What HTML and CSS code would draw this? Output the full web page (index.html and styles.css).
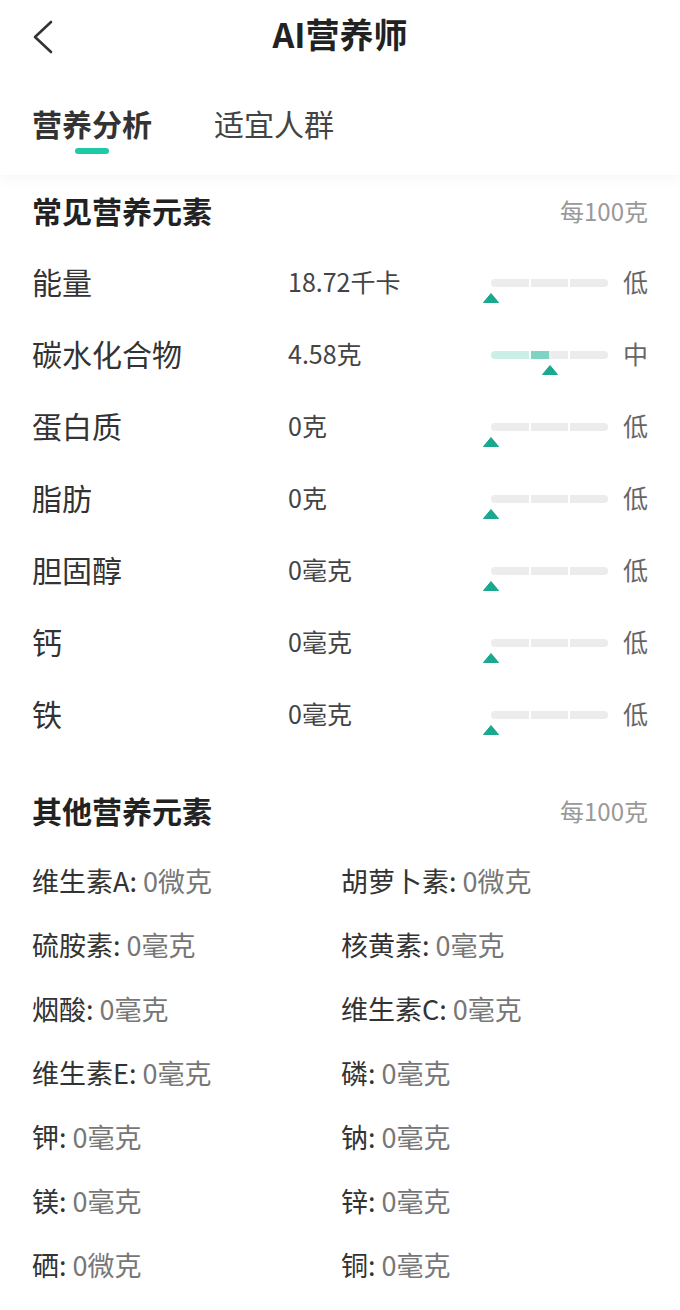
FILE: index.html
```html
<!DOCTYPE html>
<html lang="zh">
<head>
<meta charset="utf-8">
<title>AI营养师</title>
<link rel="stylesheet" href="styles.css">
</head>
<body>
<header class="header">
  <div class="nav">
    <svg class="back" width="24" height="34" viewBox="0 0 24 34"><polyline points="19,2 3,17 19,32" fill="none" stroke="#333" stroke-width="2.6" stroke-linecap="round" stroke-linejoin="round"/></svg>
    <h1 class="title">AI营养师</h1>
  </div>
  <div class="tabs">
    <div class="tab active">营养分析<span class="indicator"></span></div>
    <div class="tab">适宜人群</div>
  </div>
</header>

<section class="section common">
  <div class="sec-head"><h2>常见营养元素</h2><span class="unit">每100克</span></div>
  <div class="rows">
    <div class="row"><span class="label">能量</span><span class="value">18.72千卡</span>
      <div class="bar"><div class="segs"><i class="seg"></i><i class="seg"></i><i class="seg"></i></div><svg class="marker" style="left:0%" width="16" height="10" viewBox="0 0 16 10"><path d="M8 0.5 L15.5 9.5 L0.5 9.5 Z" fill="#1aa88f" stroke="#1aa88f" stroke-linejoin="round"/></svg></div>
      <span class="level">低</span></div>
    <div class="row"><span class="label">碳水化合物</span><span class="value">4.58克</span>
      <div class="bar"><div class="segs"><i class="seg light"></i><i class="seg half"></i><i class="seg"></i></div><svg class="marker" style="left:50.4%" width="16" height="10" viewBox="0 0 16 10"><path d="M8 0.5 L15.5 9.5 L0.5 9.5 Z" fill="#1aa88f" stroke="#1aa88f" stroke-linejoin="round"/></svg></div>
      <span class="level">中</span></div>
    <div class="row"><span class="label">蛋白质</span><span class="value">0克</span>
      <div class="bar"><div class="segs"><i class="seg"></i><i class="seg"></i><i class="seg"></i></div><svg class="marker" style="left:0%" width="16" height="10" viewBox="0 0 16 10"><path d="M8 0.5 L15.5 9.5 L0.5 9.5 Z" fill="#1aa88f" stroke="#1aa88f" stroke-linejoin="round"/></svg></div>
      <span class="level">低</span></div>
    <div class="row"><span class="label">脂肪</span><span class="value">0克</span>
      <div class="bar"><div class="segs"><i class="seg"></i><i class="seg"></i><i class="seg"></i></div><svg class="marker" style="left:0%" width="16" height="10" viewBox="0 0 16 10"><path d="M8 0.5 L15.5 9.5 L0.5 9.5 Z" fill="#1aa88f" stroke="#1aa88f" stroke-linejoin="round"/></svg></div>
      <span class="level">低</span></div>
    <div class="row"><span class="label">胆固醇</span><span class="value">0毫克</span>
      <div class="bar"><div class="segs"><i class="seg"></i><i class="seg"></i><i class="seg"></i></div><svg class="marker" style="left:0%" width="16" height="10" viewBox="0 0 16 10"><path d="M8 0.5 L15.5 9.5 L0.5 9.5 Z" fill="#1aa88f" stroke="#1aa88f" stroke-linejoin="round"/></svg></div>
      <span class="level">低</span></div>
    <div class="row"><span class="label">钙</span><span class="value">0毫克</span>
      <div class="bar"><div class="segs"><i class="seg"></i><i class="seg"></i><i class="seg"></i></div><svg class="marker" style="left:0%" width="16" height="10" viewBox="0 0 16 10"><path d="M8 0.5 L15.5 9.5 L0.5 9.5 Z" fill="#1aa88f" stroke="#1aa88f" stroke-linejoin="round"/></svg></div>
      <span class="level">低</span></div>
    <div class="row"><span class="label">铁</span><span class="value">0毫克</span>
      <div class="bar"><div class="segs"><i class="seg"></i><i class="seg"></i><i class="seg"></i></div><svg class="marker" style="left:0%" width="16" height="10" viewBox="0 0 16 10"><path d="M8 0.5 L15.5 9.5 L0.5 9.5 Z" fill="#1aa88f" stroke="#1aa88f" stroke-linejoin="round"/></svg></div>
      <span class="level">低</span></div>
  </div>
</section>

<section class="section other">
  <div class="sec-head"><h2>其他营养元素</h2><span class="unit">每100克</span></div>
  <div class="grid">
    <div class="item">维生素A: <span class="v">0微克</span></div>
    <div class="item">胡萝卜素: <span class="v">0微克</span></div>
    <div class="item">硫胺素: <span class="v">0毫克</span></div>
    <div class="item">核黄素: <span class="v">0毫克</span></div>
    <div class="item">烟酸: <span class="v">0毫克</span></div>
    <div class="item">维生素C: <span class="v">0毫克</span></div>
    <div class="item">维生素E: <span class="v">0毫克</span></div>
    <div class="item">磷: <span class="v">0毫克</span></div>
    <div class="item">钾: <span class="v">0毫克</span></div>
    <div class="item">钠: <span class="v">0毫克</span></div>
    <div class="item">镁: <span class="v">0毫克</span></div>
    <div class="item">锌: <span class="v">0毫克</span></div>
    <div class="item">硒: <span class="v">0微克</span></div>
    <div class="item">铜: <span class="v">0毫克</span></div>
  </div>
</section>
</body>
</html>
```

FILE: styles.css
```css
* { box-sizing: border-box; }
html, body { margin: 0; padding: 0; }
body {
  width: 680px;
  background: #fff;
  font-family: "Noto Sans CJK SC", "Noto Sans", sans-serif;
  color: #333;
}
.header {
  height: 175px;
  background: #fff;
  box-shadow: 0 5px 12px rgba(0, 0, 0, 0.035);
  position: relative;
  z-index: 1;
}
.nav {
  height: 74px;
  padding-bottom: 6px;
  display: flex;
  align-items: center;
  justify-content: center;
  position: relative;
}
.back {
  position: absolute;
  left: 32px;
  top: 20px;
}
.title {
  margin: 0;
  font-size: 34px;
  font-weight: 700;
  line-height: 50px;
  color: #222;
}
.tabs {
  display: flex;
  gap: 62px;
  padding: 29px 0 0 32px;
}
.tab {
  font-size: 30px;
  line-height: 40px;
  color: #444;
  display: flex;
  flex-direction: column;
  align-items: center;
}
.tab.active {
  font-weight: 700;
  color: #333;
}
.indicator {
  width: 34px;
  height: 6px;
  border-radius: 3px;
  background: #1ec9a6;
  margin-top: 5px;
}
.section {
  padding: 0 32px;
}
.common { padding-top: 15px; }
.other { padding-top: 41px; }
.sec-head {
  display: flex;
  justify-content: space-between;
  align-items: center;
  height: 40px;
}
.sec-head h2 {
  margin: 0;
  font-size: 30px;
  font-weight: 700;
  color: #222;
}
.unit {
  font-size: 24px;
  color: #999;
}
.rows {
  margin-top: 15px;
}
.row {
  display: grid;
  grid-template-columns: 256px 203px 117px 1fr;
  align-items: center;
  height: 72px;
}
.label {
  font-size: 30px;
  color: #333;
}
.value {
  font-size: 25px;
  color: #444;
}
.level {
  font-size: 25px;
  color: #666;
  text-align: right;
}
.bar {
  position: relative;
  height: 8px;
  margin-top: 3px;
}
.segs {
  display: flex;
  gap: 2px;
  height: 8px;
}
.seg {
  flex: 1;
  background: #ececec;
}
.seg:first-child { border-radius: 4px 0 0 4px; }
.seg:last-child { border-radius: 0 4px 4px 0; }
.seg.light { background: #c9efe6; }
.seg.half { background: linear-gradient(to right, #7fd3c3 50%, #ececec 50%); }
.marker {
  position: absolute;
  top: 14px;
  transform: translateX(-50%);
}
.grid {
  margin-top: 18px;
  display: grid;
  grid-template-columns: 309px 1fr;
  grid-auto-rows: 64px;
  align-items: center;
}
.item {
  font-size: 27px;
  color: #333;
}
.item .v {
  color: #777;
}
```
